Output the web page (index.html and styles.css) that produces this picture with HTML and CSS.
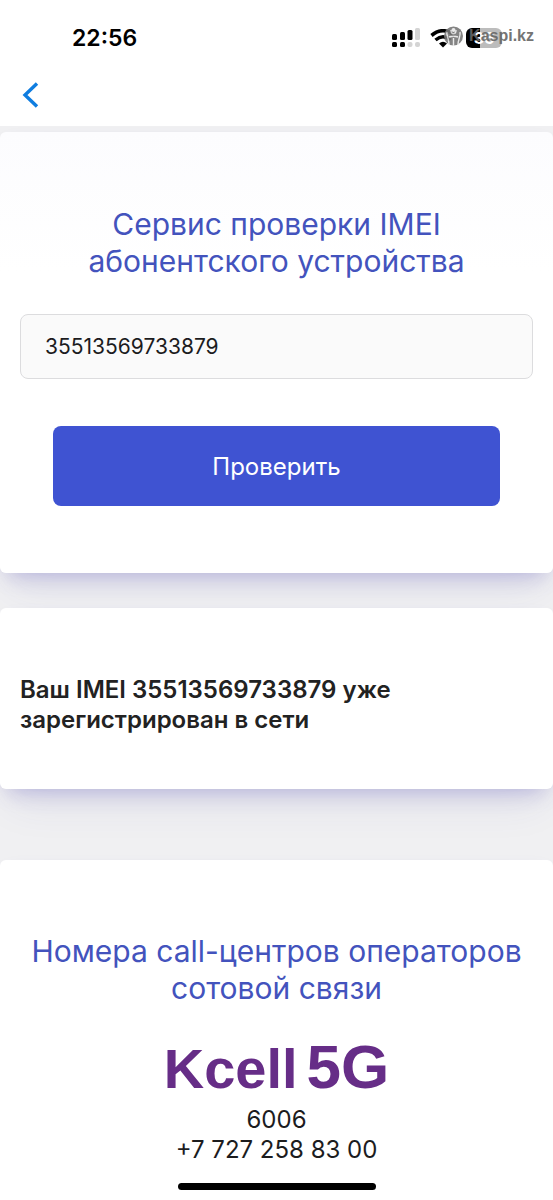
FILE: index.html
```html
<!DOCTYPE html>
<html lang="ru">
<head>
<meta charset="utf-8">
<meta name="viewport" content="width=device-width, initial-scale=1">
<title>Сервис проверки IMEI</title>
<link rel="stylesheet" href="styles.css">
</head>
<body>
<header class="top">
  <div class="status">
    <time class="clock">22:56</time>
    <div class="indicators">
      <svg width="28" height="20" viewBox="0 0 28 20" aria-hidden="true">
        <rect x="0" y="6" width="5" height="6" rx="1.5"/>
        <rect x="8" y="4" width="5" height="8" rx="1.5"/>
        <rect x="15.500" y="2" width="5" height="10" rx="1.5"/>
        <rect x="23" y="0" width="5" height="12" rx="1.500" fill="#d4d4d4"/>
        <rect x="0" y="14" width="5" height="5" rx="1.500"/>
        <rect x="8" y="14" width="5" height="5" rx="1.500"/>
        <rect x="15.500" y="14" width="5" height="5" rx="2" fill="#d4d4d4"/>
        <rect x="23" y="14" width="5" height="5" rx="2" fill="#d4d4d4"/>
      </svg>
      <svg width="26" height="19" viewBox="0 0 26 19" aria-hidden="true">
        <path d="M1.500 6.500Q13-3 24.500 6.500" fill="none" stroke="#000" stroke-width="3.600"/>
        <path d="M5.500 11Q13 4.500 20.500 11" fill="none" stroke="#000" stroke-width="3.400"/>
        <path d="M9 14.500Q13 11 17 14.500L13 18.500Z"/>
      </svg>
      <div class="battery">36</div>
    </div>
    <div class="watermark">
      <svg width="19" height="20" viewBox="0 0 19 20" aria-hidden="true">
        <circle cx="9.500" cy="10" r="9.500" fill="#777"/>
        <path d="M5 19C5 12 2 9 3 6M9.500 20V12M14 19C14 13 17 10 16 6M7 4C7 9 12 9 12 4M5 11C8 10 11 10 14 11" fill="none" stroke="#e8e8e8" stroke-width="1.400"/>
        <circle cx="9.500" cy="4" r="2" fill="#e8e8e8"/>
      </svg>
      <span>Kaspi.kz</span>
    </div>
  </div>
  <nav class="nav">
    <button class="back" type="button" aria-label="Назад">
      <svg width="18" height="28" viewBox="0 0 18 28" aria-hidden="true">
        <path d="M15 2.500L3 14L15 25.500" fill="none" stroke="#0f7de0" stroke-width="3.400"/>
      </svg>
    </button>
  </nav>
</header>
<main class="content">
  <form class="card check">
    <h1 class="title"><label for="imei">Сервис проверки IMEI абонентского устройства</label></h1>
    <input class="field" id="imei" type="text" inputmode="numeric" value="35513569733879">
    <button class="submit" type="button">Проверить</button>
  </form>
  <section class="card result">
    <p class="message">Ваш IMEI 35513569733879 уже зарегистрирован в сети</p>
  </section>
  <section class="card contacts">
    <h2 class="title">Номера call-центров операторов сотовой связи</h2>
    <div class="logo"><span>Kcell</span><span class="logo-5g">5G</span></div>
    <a class="phone" href="tel:6006">6006</a>
    <a class="phone" href="tel:+77272588300">+7 727 258 83 00</a>
  </section>
</main>
<div class="home-bar"></div>
</body>
</html>
```
FILE: styles.css
```css
* {
  box-sizing: border-box;
}

body {
  margin: 0;
  min-height: 100vh;
  display: flex;
  flex-direction: column;
  background: #f0f0f2;
  color: #1c1c1e;
  font-family: Inter, "Noto Sans", sans-serif;
}

.top {
  background: #fff;
}

.status {
  position: relative;
  display: flex;
  align-items: center;
  justify-content: space-between;
  height: 76px;
  padding: 0 51px 0 72px;
}

.clock {
  color: #000;
  font-size: 23px;
  font-weight: 600;
}

.indicators {
  display: flex;
  align-items: center;
  gap: 10px;
}

.battery {
  width: 36px;
  height: 20px;
  border-radius: 6px;
  background: linear-gradient(90deg, #000 14px, #bcbcbc 14px);
  color: #fff;
  font-size: 16px;
  font-weight: 700;
  line-height: 20px;
  text-align: center;
}

.watermark {
  position: absolute;
  top: 26px;
  right: 19px;
  display: flex;
  align-items: center;
  gap: 6px;
  color: #666;
  font-family: "Liberation Sans", sans-serif;
  font-size: 16px;
  font-weight: 700;
  line-height: 20px;
  opacity: 0.9;
}

.nav {
  display: flex;
  padding: 5px 22px 17px;
}

.back {
  display: flex;
  padding: 0;
  border: 0;
  background: none;
}

.content {
  flex: 1;
  display: flex;
  flex-direction: column;
  padding-top: 6px;
}

.card {
  display: flex;
  flex-direction: column;
  border-radius: 6px;
  background: #fff;
  box-shadow: 0 24px 40px -12px rgba(60, 60, 150, 0.1), 0 10px 20px -8px rgba(70, 60, 180, 0.3);
}

.check {
  margin-bottom: 35px;
  padding: 74px 20px 67px;
  background: linear-gradient(#fcfcfe, #fff 140px);
}

.title {
  margin: 0;
  color: #4353bd;
  font-size: 30px;
  font-weight: 400;
  line-height: 37px;
  text-align: center;
}

.field {
  width: 100%;
  height: 65px;
  margin: 34px 0 47px;
  padding: 0 24px;
  border: 1px solid #dcdcde;
  border-radius: 8px;
  background: #fafafa;
  color: #1c1c1e;
  font: 400 21px Inter, sans-serif;
}

.submit {
  height: 80px;
  margin: 0 33px;
  border: 0;
  border-radius: 8px;
  background: #3f53d2;
  color: #fff;
  font: 400 24px Inter, sans-serif;
}

.result {
  margin-bottom: 71px;
  padding: 67px 20px 54px;
}

.message {
  max-width: 400px;
  margin: 0;
  color: #222;
  font-size: 24px;
  font-weight: 600;
  line-height: 30px;
}

.contacts {
  flex: 1;
  align-items: center;
  padding: 73px 20px 36px;
  border-radius: 6px 6px 0 0;
}

.logo {
  display: flex;
  align-items: baseline;
  gap: 9px;
  margin: 30px 0 6px;
  color: #662d87;
  font-family: "Liberation Sans", sans-serif;
  font-size: 56px;
  font-weight: 700;
  line-height: 60px;
}

.logo-5g {
  font-size: 62px;
}

.phone {
  color: #1c1c1e;
  font-size: 24px;
  line-height: 30px;
  text-decoration: none;
}

.home-bar {
  position: fixed;
  bottom: 10px;
  left: 50%;
  width: 198px;
  height: 7px;
  margin-left: -99px;
  border-radius: 4px;
  background: #000;
}
```
